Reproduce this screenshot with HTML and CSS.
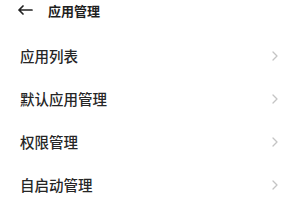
FILE: index.html
```html
<!DOCTYPE html>
<html lang="zh">
<head>
<meta charset="utf-8">
<link rel="stylesheet" href="styles.css">
</head>
<body>
<div class="page">
  <header class="bar">
    <svg class="back" width="16" height="10" viewBox="0 0 16 10"><path d="M15 5H2M6 1L2 5l4 4" fill="none" stroke="#222" stroke-width="1.7" stroke-linecap="round" stroke-linejoin="round"/></svg>
    <span class="title">应用管理</span>
  </header>
  <ul class="list">
    <li class="row"><span>应用列表</span><svg class="chev" width="6" height="10" viewBox="0 0 6 10"><path d="M1 1l4 4-4 4" fill="none" stroke="#c4c4c4" stroke-width="1.3" stroke-linecap="round" stroke-linejoin="round"/></svg></li>
    <li class="row"><span>默认应用管理</span><svg class="chev" width="6" height="10" viewBox="0 0 6 10"><path d="M1 1l4 4-4 4" fill="none" stroke="#c4c4c4" stroke-width="1.3" stroke-linecap="round" stroke-linejoin="round"/></svg></li>
    <li class="row"><span>权限管理</span><svg class="chev" width="6" height="10" viewBox="0 0 6 10"><path d="M1 1l4 4-4 4" fill="none" stroke="#c4c4c4" stroke-width="1.3" stroke-linecap="round" stroke-linejoin="round"/></svg></li>
    <li class="row"><span>自启动管理</span><svg class="chev" width="6" height="10" viewBox="0 0 6 10"><path d="M1 1l4 4-4 4" fill="none" stroke="#c4c4c4" stroke-width="1.3" stroke-linecap="round" stroke-linejoin="round"/></svg></li>
  </ul>
</div>
</body>
</html>
```
FILE: styles.css
```css
html, body {
  margin: 0;
  padding: 0;
  background: #fff;
}
.page {
  width: 300px;
  height: 200px;
  overflow: hidden;
  font-family: "Noto Sans CJK SC", "Noto Sans", sans-serif;
  color: #222;
}
.bar {
  height: 20px;
  display: flex;
  align-items: center;
  padding-left: 17px;
}
.back {
  display: block;
  margin-right: 15px;
}
.title {
  font-size: 13px;
  font-weight: 700;
  color: #1e1e1e;
}
.list {
  list-style: none;
  margin: 14px 0 0;
  padding: 0;
}
.row {
  height: 43px;
  display: flex;
  align-items: center;
  justify-content: space-between;
  padding: 0 22px 0 20px;
  font-size: 14.5px;
  font-weight: 500;
  color: #262626;
}
.chev {
  display: block;
}
```
